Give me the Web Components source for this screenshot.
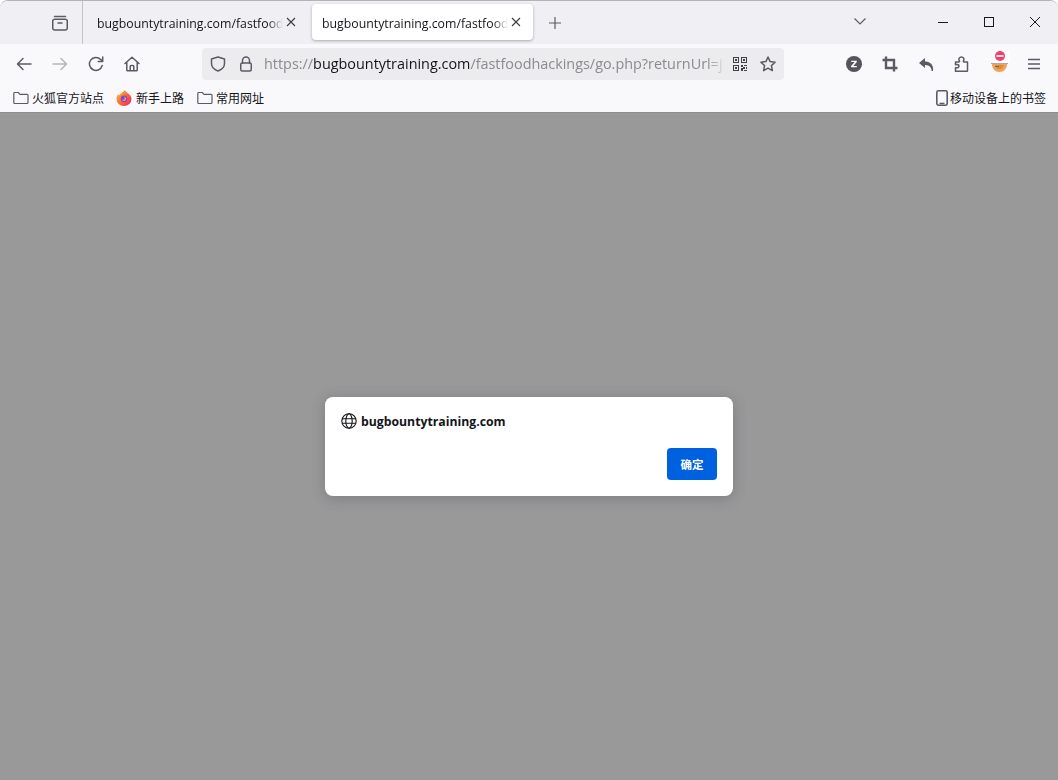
<!DOCTYPE html>
<html lang="zh">
<head>
<meta charset="utf-8">
<title>bugbountytraining.com</title>
<style>
  html, body { margin: 0; height: 100%; background: #fff; }
  body { font-family: "Open Sans", "Noto Sans CJK SC", sans-serif; overflow: hidden; }
</style>
</head>
<body>
<browser-window>
  <tab-strip>
    <browser-tab>bugbountytraining.com/fastfood</browser-tab>
    <browser-tab selected>bugbountytraining.com/fastfood</browser-tab>
  </tab-strip>
  <nav-bar></nav-bar>
  <bookmark-bar>
    <bookmark-item icon="folder">火狐官方站点</bookmark-item>
    <bookmark-item icon="firefox">新手上路</bookmark-item>
    <bookmark-item icon="folder">常用网址</bookmark-item>
    <bookmark-item icon="mobile" slot="end">移动设备上的书签</bookmark-item>
  </bookmark-bar>
  <page-overlay>
    <prompt-dialog host-name="bugbountytraining.com" button="确定"></prompt-dialog>
  </page-overlay>
</browser-window>

<script>
const STROKE = 'fill="none" stroke="currentColor" stroke-width="1.5" stroke-linecap="round" stroke-linejoin="round"';

class BrowserWindow extends HTMLElement {
  constructor() {
    super();
    const shadow = this.attachShadow({ mode: 'open' });
    shadow.innerHTML = `
      <style>
        :host {
          display: flex;
          flex-direction: column;
          height: 780px;
          box-sizing: border-box;
          border-top: 1px solid #b4b4b4;
          border-top-left-radius: 8px;
          border-top-right-radius: 8px;
          overflow: hidden;
          background: #f0f0f4;
        }
      </style>
      <slot></slot>
    `;
  }
}

class TabStrip extends HTMLElement {
  constructor() {
    super();
    const shadow = this.attachShadow({ mode: 'open' });
    shadow.innerHTML = `
      <style>
        :host {
          display: flex;
          align-items: center;
          height: 43px;
          background: #f0f0f4;
          color: #5b5b66;
        }
        .side {
          width: 83px;
          height: 100%;
          box-sizing: border-box;
          border-right: 1px solid #c4c4c8;
          display: flex;
          align-items: center;
          justify-content: flex-end;
          padding-right: 14px;
        }
        .tabs { display: flex; align-items: center; gap: 4px; margin: -1px 0 0 4px; }
        .plus { margin-left: 15px; display: flex; }
        .chevron { position: absolute; left: 853px; top: 15px; display: flex; }
        .controls { position: absolute; right: 0; top: 1px; display: flex; color: #1a1a1a; }
        .controls span { width: 46px; height: 42px; display: flex; align-items: center; justify-content: center; }
      </style>
      <div class="side">
        <svg width="16" height="16" viewBox="0 0 16 16" ${STROKE}>
          <rect x=".75" y="4.25" width="14.5" height="10.75" rx="2"/>
          <path d="M2.5 1.5h11M6 8h4"/>
        </svg>
      </div>
      <div class="tabs"><slot></slot></div>
      <div class="plus">
        <svg width="14" height="14" viewBox="0 0 14 14" fill="none" stroke="currentColor" stroke-width="1.2"><path d="M7 1v12M1 7h12"/></svg>
      </div>
      <div class="chevron">
        <svg width="14" height="14" viewBox="0 0 14 14" fill="none" stroke="currentColor" stroke-width="1.2"><path d="M1.5 3.5 7 9l5.5-5.5"/></svg>
      </div>
      <div class="controls">
        <span><svg width="10" height="10" viewBox="0 0 10 10" stroke="currentColor"><path d="M0 5.5h10"/></svg></span>
        <span><svg width="10" height="10" viewBox="0 0 10 10" fill="none" stroke="currentColor"><rect x=".5" y=".5" width="9" height="9"/></svg></span>
        <span><svg width="10" height="10" viewBox="0 0 10 10" stroke="currentColor"><path d="M0 0l10 10M10 0 0 10"/></svg></span>
      </div>
    `;
  }
}

class BrowserTab extends HTMLElement {
  constructor() {
    super();
    const shadow = this.attachShadow({ mode: 'open' });
    shadow.innerHTML = `
      <style>
        :host {
          display: flex;
          align-items: center;
          width: 221px;
          height: 36px;
          box-sizing: border-box;
          padding: 2px 12px 0 10px;
          border-radius: 4px;
          font-size: 12.3px;
          color: #15141a;
        }
        :host([selected]) {
          background: #fff;
          box-shadow: 0 1px 3px rgba(0, 0, 0, .3);
        }
        .title {
          flex: 1;
          min-width: 0;
          overflow: hidden;
          white-space: nowrap;
          -webkit-mask-image: linear-gradient(to right, #000 92%, transparent);
          mask-image: linear-gradient(to right, #000 92%, transparent);
        }
        svg { flex: none; margin: -2px 0 0 3px; color: #3a3a42; }
      </style>
      <div class="title"><slot></slot></div>
      <svg width="10" height="10" viewBox="0 0 10 10" stroke="currentColor" stroke-width="1.1"><path d="M1 1l8 8M9 1 1 9"/></svg>
    `;
  }
}

class NavBar extends HTMLElement {
  constructor() {
    super();
    const shadow = this.attachShadow({ mode: 'open' });
    shadow.innerHTML = `
      <style>
        :host {
          display: flex;
          align-items: center;
          height: 40px;
          background: #f9f9fb;
          color: #5b5b66;
          padding-left: 6px;
          box-sizing: border-box;
        }
        .btn { width: 36px; height: 32px; display: flex; align-items: center; justify-content: center; flex: none; }
        .btn.off { color: #b4b4ba; }
        .url {
          display: flex;
          align-items: center;
          width: 582px;
          height: 32px;
          box-sizing: border-box;
          margin-left: 52px;
          background: #ececef;
          border-radius: 4px;
          padding-left: 8px;
          flex: none;
        }
        .url .ico { width: 16px; height: 16px; display: flex; flex: none; }
        .url .lock { margin-left: 12px; }
        .text {
          width: 462px;
          margin: -2px 0 0 10px;
          flex: none;
          white-space: nowrap;
          overflow: hidden;
          font-size: 14.4px;
          color: #8a8a8f;
          -webkit-mask-image: linear-gradient(to right, #000 96%, transparent);
          mask-image: linear-gradient(to right, #000 96%, transparent);
        }
        .text b { font-weight: 400; color: #15141a; }
        .qr { margin-left: 6px; color: #3f3f46; }
        .star { margin-left: 12px; }
        .tools { display: flex; margin-left: 52px; }
      </style>
      <div class="btn"><svg width="16" height="16" viewBox="0 0 16 16" ${STROKE}><path d="M15 8H1.5M7 2.5 1.5 8 7 13.5"/></svg></div>
      <div class="btn off"><svg width="16" height="16" viewBox="0 0 16 16" ${STROKE}><path d="M1 8h13.5M9 2.5 14.5 8 9 13.5"/></svg></div>
      <div class="btn"><svg width="16" height="16" viewBox="0 0 16 16" ${STROKE}><path d="M14.2 9.5A6.5 6.5 0 1 1 12.6 3.4L14.5 5.2"/><path d="M14.7 1v4.5h-4.5" stroke-width="1.5"/></svg></div>
      <div class="btn"><svg width="16" height="16" viewBox="0 0 16 16" ${STROKE}><path d="M1 7.5 8 1.2l7 6.3M2.8 6.2V14a.8.8 0 0 0 .8.8h8.8a.8.8 0 0 0 .8-.8V6.2M6.2 14.8V10.4a1 1 0 0 1 1-1h1.6a1 1 0 0 1 1 1v4.4"/></svg></div>
      <div class="url">
        <span class="ico"><svg width="16" height="16" viewBox="0 0 16 16" ${STROKE}><path d="M8 1 1.5 3v4.5c0 4 3 6.3 6.5 7.5 3.5-1.2 6.5-3.500 6.500-7.500V3z"/></svg></span>
        <span class="ico lock"><svg width="16" height="16" viewBox="0 0 16 16" ${STROKE}><path d="M4.500 7V4.500a3.500 3.500 0 0 1 7 0V7"/><rect x="2.750" y="7" width="10.500" height="8" rx="1.500"/></svg></span>
        <div class="text">https://<b>bugbountytraining.com</b>/fastfoodhackings/go.php?returnUrl=j</div>
        <span class="ico qr"><svg width="16" height="16" viewBox="0 0 16 16" fill="currentColor" shape-rendering="crispEdges"><path d="M1 1h6v6H1zM2 2v4h4V2zM3 3h2v2H3zM9 1h6v6H9zM10 2v4h4V2zM11 3h2v2h-2zM1 9h6v6H1zM2 10v4h4v-4zM3 11h2v2H3zM9 9h2v2H9zM12 9h3v1h-3zM11 11h2v2h-2zM14 11h1v2h-1zM9 12h2v3H9zM12 14h3v1h-3z" fill-rule="evenodd"/></svg></span>
        <span class="ico star"><svg width="16" height="16" viewBox="0 0 16 16" ${STROKE}><path d="M8 1l2.100 4.600 5 .600-3.700 3.400 1 5L8 12.100 3.600 14.600l1-5L.9 6.200l5-.600z"/></svg></span>
      </div>
      <div class="tools">
        <div class="btn"><svg width="16" height="16" viewBox="0 0 16 16"><circle cx="8" cy="8" r="8" fill="#55555e"/><path d="M5.200 4.800h5.600v1.300L7.300 10h3.500v1.300H5.100V10l3.500-3.900H5.200z" fill="#fff"/></svg></div>
        <div class="btn"><svg width="16" height="16" viewBox="0 0 16 16" fill="none" stroke="currentColor" stroke-width="2.400"><path d="M4 .5V12h11.500M.5 4H12v11.500"/></svg></div>
        <div class="btn"><svg width="16" height="16" viewBox="0 0 16 16" fill="currentColor"><path d="M7 2 1 7l6 5V9c3 0 5 .8 6 3.200.4 1 .6 1.800.6 2.800h1.400c.5-3-.2-6-2.500-7.800C11.100 6 9.200 5.500 7 5.500z"/></svg></div>
        <div class="btn"><svg width="16" height="16" viewBox="0 0 16 16" ${STROKE}><path d="M1.500 6h3.300c.6 0 .9-.5.600-1-1.300-2.200.2-4 2-4s3.300 1.800 2 4c-.3.500 0 1 .6 1h3.500v8.800a.5.500 0 0 1-.5.500H1.500v-3.600c2.600.6 3.500-.8 3.500-1.700S4 8 1.500 8.700z"/></svg></div>
        <div class="btn ext">
          <svg width="28" height="28" viewBox="0 0 28 28">
            <path d="M8 14h15c0 4.500-3 8-7.500 8S8 18.500 8 14z" fill="#eda55e"/>
            <path d="M11 15h9l-2 4h-5z" fill="#e08a35"/>
            <path d="M7 13.500h17" stroke="#a8a8a8" stroke-width="1"/>
            <path d="M11 16.500h4" stroke="#7a6a5a" stroke-width="1"/>
            <rect x="9" y="1" width="17" height="12" fill="#fff"/>
            <circle cx="16" cy="6" r="5" fill="#f0406e"/>
            <rect x="12.500" y="5.200" width="7" height="1.600" fill="#fff"/>
          </svg>
        </div>
        <div class="btn"><svg width="16" height="16" viewBox="0 0 16 16" fill="none" stroke="currentColor" stroke-width="1.300"><path d="M2 3.500h12M2 8h12M2 12.500h12"/></svg></div>
      </div>
    `;
  }
}

class BookmarkBar extends HTMLElement {
  constructor() {
    super();
    const shadow = this.attachShadow({ mode: 'open' });
    shadow.innerHTML = `
      <style>
        :host {
          display: flex;
          align-items: center;
          justify-content: space-between;
          height: 28px;
          background: #f9f9fb;
          box-sizing: border-box;
          padding: 0 12px 0 13px;
        }
        .left { display: flex; gap: 12px; }
      </style>
      <div class="left"><slot></slot></div>
      <slot name="end"></slot>
    `;
  }
}

const BOOKMARK_ICONS = {
  folder: `<svg width="16" height="16" viewBox="0 0 16 16" fill="none" stroke="#5b5b66" stroke-width="1.200" stroke-linejoin="round"><path d="M.8 3.500a1 1 0 0 1 1-1h3.400l1.800 1.800h7a1 1 0 0 1 1 1v7.200a1 1 0 0 1-1 1H1.800a1 1 0 0 1-1-1z"/></svg>`,
  firefox: `<svg width="16" height="16" viewBox="0 0 16 16" style="margin-right:1px">
    <defs><linearGradient id="fx" x1="0" y1="0" x2="1" y2="1"><stop offset="0" stop-color="#ffd23f"/><stop offset=".5" stop-color="#ff6a2f"/><stop offset="1" stop-color="#e8207f"/></linearGradient></defs>
    <path d="M9 0c.3 1.500 1.800 2 2.700 3.200 2 1 3.800 3 3.800 5.800A7.500 7 0 0 1 .5 9c0-2 .6-3.700 1.700-5 .2.700.5 1.200 1 1.500C3.700 3.500 6.500 3 9 0z" fill="url(#fx)"/>
    <circle cx="8" cy="8.800" r="3.200" fill="#7542e5"/>
    <path d="M8 6.600a2.200 2.200 0 1 1-2.100 2.900c.9.700 2.600.4 2.800-.9.100-.9-.4-1.500-.7-2z" fill="#ffa040"/>
  </svg>`,
  mobile: `<svg width="12" height="16" viewBox="0 0 12 16" style="margin-right:-1px"><rect x=".8" y=".8" width="10.400" height="14.400" rx="1.600" fill="none" stroke="#5b5b66" stroke-width="1.600"/><rect x="3.500" y="12.700" width="5" height="1.500" fill="#5b5b66"/></svg>`
};

class BookmarkItem extends HTMLElement {
  constructor() {
    super();
    const shadow = this.attachShadow({ mode: 'open' });
    shadow.innerHTML = `
      <style>
        :host {
          display: flex;
          align-items: center;
          gap: 3px;
          font-size: 12px;
          font-family: "Noto Sans CJK SC", sans-serif;
          color: #15141a;
          white-space: nowrap;
        }
        :host([icon="firefox"]) { padding-right: 1px; }
        svg { flex: none; display: block; }
        .label { margin-top: -2px; }
      </style>
      ${BOOKMARK_ICONS[this.getAttribute('icon')] || ''}
      <span class="label"><slot></slot></span>
    `;
  }
}

class PageOverlay extends HTMLElement {
  constructor() {
    super();
    const shadow = this.attachShadow({ mode: 'open' });
    shadow.innerHTML = `
      <style>
        :host {
          flex: 1;
          display: flex;
          align-items: center;
          justify-content: center;
          background: #99999a;
          border-top: 1px solid #8e8e90;
        }
      </style>
      <slot></slot>
    `;
  }
}

class PromptDialog extends HTMLElement {
  constructor() {
    super();
    const shadow = this.attachShadow({ mode: 'open' });
    shadow.innerHTML = `
      <style>
        :host {
          display: block;
          width: 408px;
          height: 99px;
          box-sizing: border-box;
          padding: 16px;
          background: #fff;
          border-radius: 8px;
          box-shadow: 0 2px 14px rgba(58, 57, 68, .3);
          color: #15141a;
        }
        .head {
          display: flex;
          align-items: center;
          gap: 4px;
          height: 16px;
          font-size: 12.25px;
          font-weight: 700;
        }
        .foot { display: flex; justify-content: flex-end; margin-top: 19px; }
        button {
          width: 50px;
          height: 32px;
          border: 0;
          border-radius: 4px;
          padding: 0;
          background: #0061e0;
          color: #fff;
          font: 700 11.500px "Noto Sans CJK SC", sans-serif;
        }
      </style>
      <div class="head">
        <svg width="16" height="16" viewBox="0 0 16 16" fill="none" stroke="#15141a" stroke-width="1.100">
          <circle cx="8" cy="8" r="7.200"/>
          <ellipse cx="8" cy="8" rx="3.200" ry="7.200"/>
          <path d="M1 5.800h14M1 10.200h14"/>
        </svg>
        <span>${this.getAttribute('host-name')}</span>
      </div>
      <div class="foot"><button>${this.getAttribute('button')}</button></div>
    `;
  }
}

customElements.define('browser-window', BrowserWindow);
customElements.define('tab-strip', TabStrip);
customElements.define('browser-tab', BrowserTab);
customElements.define('nav-bar', NavBar);
customElements.define('bookmark-bar', BookmarkBar);
customElements.define('bookmark-item', BookmarkItem);
customElements.define('page-overlay', PageOverlay);
customElements.define('prompt-dialog', PromptDialog);
</script>
</body>
</html>
